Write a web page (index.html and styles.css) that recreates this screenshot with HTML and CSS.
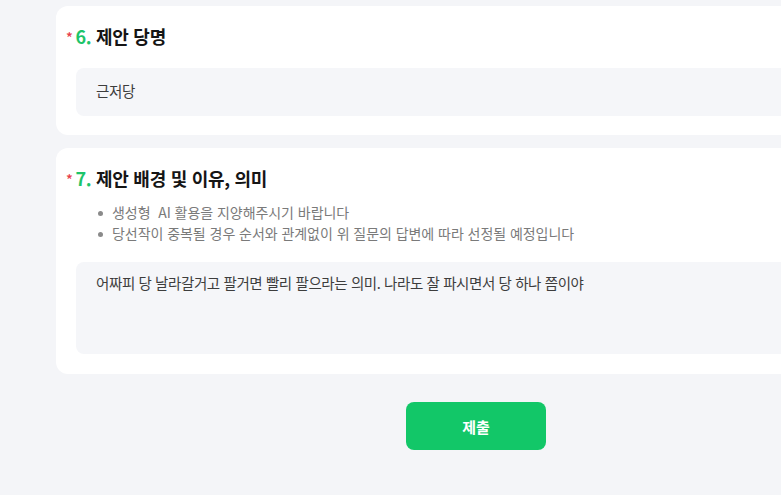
FILE: index.html
```html
<!DOCTYPE html>
<html lang="ko">
<head>
<meta charset="utf-8">
<link rel="stylesheet" href="styles.css">
</head>
<body>
<main class="form">
  <section class="card card-first">
    <h2 class="q-title"><span class="req">*</span><span class="num">6.</span> 제안 당명</h2>
    <div class="answer answer-short">근저당</div>
  </section>
  <section class="card card-second">
    <h2 class="q-title"><span class="req">*</span><span class="num">7.</span> 제안 배경 및 이유, 의미</h2>
    <ul class="notes">
      <li>생성형&nbsp; AI 활용을 지양해주시기 바랍니다</li>
      <li>당선작이 중복될 경우 순서와 관계없이 위 질문의 답변에 따라 선정될 예정입니다</li>
    </ul>
    <div class="answer answer-long">어짜피 당 날라갈거고 팔거면 빨리 팔으라는 의미. 나라도 잘 파시면서 당 하나 쯤이야</div>
  </section>
  <div class="actions">
    <button class="submit" type="button">제출</button>
  </div>
</main>
</body>
</html>
```
FILE: styles.css
```css
html, body {
  margin: 0;
  padding: 0;
  overflow: hidden;
  background: #f4f5f8;
  font-family: "Noto Sans CJK KR", "Noto Sans", sans-serif;
}
.form {
  width: 840px;
  margin-left: 56px;
  padding-top: 6px;
  display: flex;
  flex-direction: column;
}
.card {
  background: #ffffff;
  border-radius: 12px;
  padding: 18px 20px 19px 10px;
}
.card-first {
  height: 92px;
  padding-bottom: 19px;
  box-sizing: content-box;
}
.card-second {
  margin-top: 13px;
  padding-bottom: 20px;
}
.q-title {
  margin: 0;
  font-size: 18px;
  font-weight: 700;
  color: #151515;
  line-height: 24px;
  height: 24px;
  letter-spacing: -0.3px;
}
.req {
  color: #e8404a;
  font-size: 14px;
  font-weight: 500;
  margin-right: 2px;
  position: relative;
  top: -1px;
}
.num {
  color: #1dc46a;
  margin-left: 1px;
}
.answer {
  margin-left: 10px;
  background: #f5f6f9;
  border-radius: 8px;
  padding: 0 20px;
  font-size: 14.5px;
  color: #3d3d3d;
  letter-spacing: -0.3px;
}
.answer-short {
  margin-top: 20px;
  height: 48px;
  line-height: 46px;
}
.answer-long {
  margin-top: 18px;
  height: 92px;
  box-sizing: border-box;
  padding-top: 10px;
  line-height: 22px;
  letter-spacing: -0.4px;
}
.notes {
  margin: 12px 0 0 0;
  padding: 0 0 0 46px;
  list-style: none;
  font-size: 14px;
  color: #7a7a7a;
  letter-spacing: -0.05px;
}
.notes li {
  line-height: 21px;
  position: relative;
}
.notes li::before {
  content: "";
  position: absolute;
  left: -14px;
  top: 9px;
  width: 5px;
  height: 5px;
  border-radius: 50%;
  background: #8a8a8a;
}
.actions {
  display: flex;
  justify-content: center;
  margin-top: 28px;
}
.submit {
  width: 140px;
  height: 48px;
  border: none;
  border-radius: 8px;
  background: #12c768;
  color: #ffffff;
  font-family: inherit;
  font-size: 15px;
  font-weight: 700;
}
```
